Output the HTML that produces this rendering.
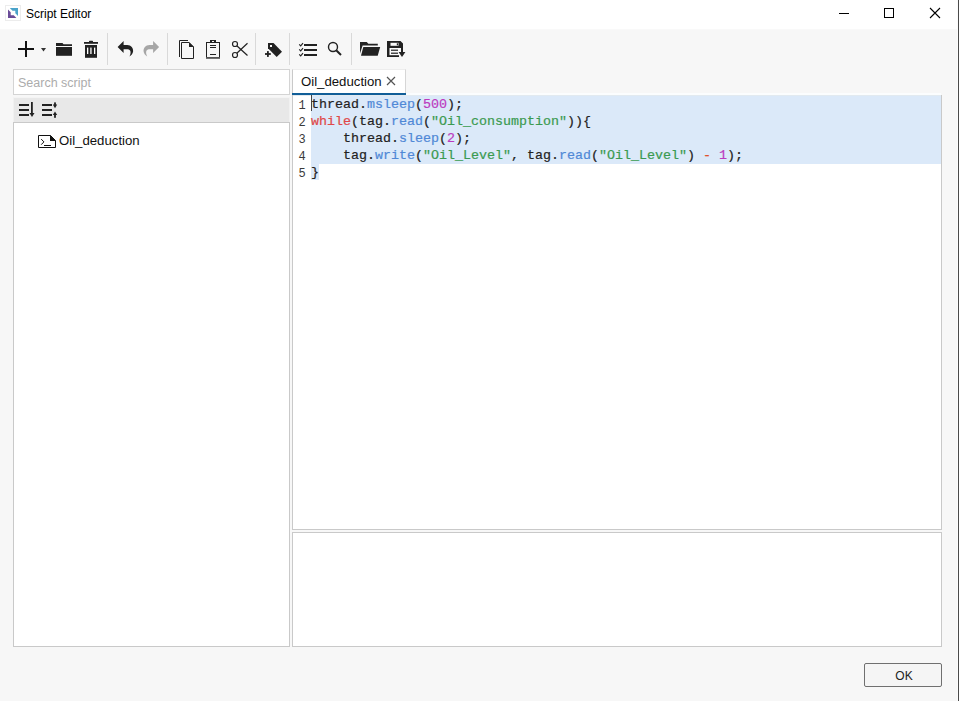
<!DOCTYPE html>
<html><head><meta charset="utf-8">
<style>
html,body{margin:0;padding:0;}
body{width:959px;height:701px;position:relative;overflow:hidden;background:#f7f7f7;font-family:"Liberation Sans",sans-serif;color:#000;}
.a{position:absolute;}
#title{left:0;top:0;width:959px;height:29px;background:#fff;}
#rb{left:958px;top:0;width:1px;height:701px;background:#4a4a4a;}
#rb2{left:957px;top:0;width:1px;height:701px;background:#fcfcfc;}
.sep{width:1px;background:#d9d9d9;top:33px;height:32px;}
#search{left:13px;top:69px;width:275px;height:24px;border:1px solid #d4d4d4;background:#fff;}
#search span{position:absolute;left:4px;top:6px;font-size:12.5px;color:#acacac;}
#sortbar{left:13px;top:97px;width:275px;height:24px;background:#e8e8e8;border:1px solid #f1f1f1;border-top-color:#f4f4f4;border-bottom:none;}
#tree{left:13px;top:122px;width:275px;height:523px;border:1px solid #c9c9c9;background:#fff;}
#tab{left:292px;top:69px;width:114px;height:26px;background:#fff;border:1px solid #d6d6d6;border-left-color:#c9c9c9;border-top-color:#ededed;border-bottom:none;box-sizing:border-box;}
#tabbar{left:292px;top:93px;width:114px;height:2px;background:#115e98;}
#editor{left:292px;top:95px;width:648px;height:434px;border:1px solid #c9c9c9;border-top:none;background:#fff;}
#output{left:292px;top:532px;width:648px;height:113px;border:1px solid #c9c9c9;background:#fff;}
#ok{left:864px;top:663px;width:76px;height:22px;border:1px solid #707070;border-radius:2px;background:#f5f5f5;font-size:12px;text-align:center;line-height:24px;color:#222;box-sizing:border-box;width:78px;height:24px;padding-left:2px;}
.code{font-family:"Liberation Mono",monospace;font-size:13.33px;line-height:17px;white-space:pre;-webkit-text-stroke:0.2px currentColor;}
.ln{left:293px;width:18px;text-align:center;color:#3a3a3a;font-size:12px;-webkit-text-stroke:0;}
.sel{background:#dbe9f9;}
.k{color:#e04848;}
.f{color:#4f88d6;}
.n{color:#bb3bbf;}
.s{color:#3a9a50;}
.o{color:#e0502a;}
.t{color:#222;}
</style></head><body>
<div id="title" class="a"></div>
<div class="a" style="left:0;top:29px;width:959px;height:1px;background:#f9f9f9;"></div>
<!-- app icon -->
<svg class="a" style="left:0;top:0" width="24" height="24" viewBox="0 0 24 24">
<rect x="5.5" y="5.5" width="15" height="15" fill="#fff" stroke="#ececec"/>
<path d="M9.8 8 L18 8 L18 16 L15.3 13.3 L15.3 10.7 L12.5 10.7 Z" fill="#4aa3ca"/>
<path d="M8 9.6 L10.7 12.3 L10.7 15.3 L13.7 15.3 L16.4 18 L8 18 Z" fill="#6a4c98"/>
</svg>
<div class="a" style="left:26px;top:7px;font-size:12px;color:#000;">Script Editor</div>
<!-- window controls -->
<div class="a" style="left:839px;top:13px;width:10px;height:1px;background:#000;"></div>
<div class="a" style="left:884px;top:8px;width:8px;height:8px;border:1px solid #000;"></div>
<svg class="a" style="left:929px;top:7px" width="12" height="12" viewBox="0 0 12 12"><path d="M1 1L11 11M11 1L1 11" stroke="#000" stroke-width="1.1"/></svg>
<div id="rb2" class="a"></div>
<div id="rb" class="a"></div>

<!-- toolbar -->
<svg class="a" style="left:0;top:30px" width="420" height="39" viewBox="0 30 420 39">
<!-- plus -->
<rect x="18" y="48" width="16" height="2" fill="#111"/>
<rect x="25" y="41" width="2" height="16" fill="#111"/>
<path d="M41 48 L46 48 L43.5 51.5 Z" fill="#333"/>
<!-- folder -->
<path d="M56 43 L62.5 43 L63.5 44.2 L72 44.2 L72 45.9 L56 45.9 Z" fill="#222"/>
<rect x="56" y="47" width="16" height="8.8" fill="#222"/>
<!-- trash -->
<rect x="89" y="40.8" width="4" height="1.6" rx="0.6" fill="#222"/>
<rect x="84" y="42" width="14" height="1.8" fill="#222"/>
<rect x="85" y="45" width="12" height="12.8" fill="#222"/>
<rect x="87" y="47.6" width="1.3" height="6.4" fill="#fff"/>
<rect x="90" y="47.6" width="1.8" height="6.4" fill="#c4c4c4"/>
<rect x="94" y="47.6" width="1.3" height="6.4" fill="#fff"/>
<!-- undo -->
<path id="undoP" d="M117.6 47 L123.6 41.1 L123.6 45 L127.2 45 C131.2 45 133.4 48.2 133.1 51.5 C132.8 53.8 131.2 55.6 129.5 56.4 C130.6 54.2 131 51.8 130.1 50.4 C129.4 49.5 128.4 49.2 127 49.2 L123.6 49.2 L123.6 52.9 Z" fill="#222"/>
<!-- redo -->
<path d="M117.6 47 L123.6 41.1 L123.6 45 L127.2 45 C131.2 45 133.4 48.2 133.1 51.5 C132.8 53.8 131.2 55.6 129.5 56.4 C130.6 54.2 131 51.8 130.1 50.4 C129.4 49.5 128.4 49.2 127 49.2 L123.6 49.2 L123.6 52.9 Z" fill="#a6a6a6" transform="translate(276.7 0) scale(-1 1)"/>
<!-- copy -->
<path d="M179.5 57 L179.5 40.5 L188 40.5" fill="none" stroke="#222" stroke-width="1"/>
<path d="M181.5 42.5 L189 42.5 L193.5 47 L193.5 58.5 L181.5 58.5 Z" fill="none" stroke="#222" stroke-width="1"/>
<path d="M189 42 L194 47 L189 47 Z" fill="#222"/>
<!-- paste -->
<rect x="206.5" y="42.5" width="13" height="15.5" fill="none" stroke="#222"/>
<rect x="206" y="57" width="14" height="1.5" fill="#555"/>
<path d="M210 40 L216 40 L216 42.6 L210 42.6 Z M212 41 L212 42 L214 42 L214 41 Z" fill="#222" fill-rule="evenodd"/>
<rect x="210" y="45" width="6" height="1" fill="#222"/>
<rect x="210" y="47" width="6" height="1" fill="#222"/>
<rect x="210" y="54" width="6" height="1" fill="#222"/>
<!-- scissors -->
<circle cx="235" cy="44" r="2.5" fill="none" stroke="#222" stroke-width="1.2"/>
<circle cx="235" cy="55" r="2.5" fill="none" stroke="#222" stroke-width="1.2"/>
<path d="M236.8 45.8 L247.5 55.5 M236.8 53.2 L247.5 43.3" stroke="#222" stroke-width="1.2"/>
<!-- tag -->
<path d="M268 43 L273.5 43 L282 51.8 L276.7 56.9 L268 48.2 Z" fill="#222"/>
<rect x="270" y="45" width="2" height="2" fill="#fafafa"/>
<rect x="265" y="53.1" width="5.8" height="1.8" fill="#222"/>
<rect x="267" y="51.1" width="1.8" height="5.8" fill="#222"/>
<!-- checklist -->
<path d="M299.2 44.4 L300.7 45.9 L303 43.1 M299.2 49.4 L300.7 50.9 L303 48.1 M299.2 54.4 L300.7 55.9 L303 53.1" fill="none" stroke="#222" stroke-width="1.1"/>
<rect x="304" y="44" width="13" height="2" fill="#222"/>
<rect x="304" y="49" width="13" height="2" fill="#222"/>
<rect x="304" y="54" width="13" height="2" fill="#222"/>
<!-- search -->
<circle cx="333" cy="47" r="4.5" fill="none" stroke="#222" stroke-width="1.4"/>
<path d="M336.2 50.3 L341 55" stroke="#222" stroke-width="2"/>
<!-- open folder -->
<path d="M360 42 L366.7 42 L368.4 43.8 L377.8 43.8 L377.8 45.6 L362.6 45.6 L360 53.5 Z" fill="#222"/>
<path d="M363.3 47 L380.2 47 L377.7 55.7 L361 55.7 Z" fill="#222"/>
<!-- save -->
<path d="M387 41 L400.5 41 L403 43.5 L403 48 L399 48 L399 57 L387 57 Z" fill="#222"/>
<rect x="390.5" y="42.8" width="8" height="3" fill="#fafafa"/>
<rect x="396.8" y="43.3" width="1.2" height="2" fill="#222"/>
<rect x="389.5" y="48" width="10.5" height="7.2" fill="#fafafa"/>
<rect x="391" y="49.6" width="7" height="1.2" fill="#222"/>
<rect x="391" y="52.6" width="7" height="1.2" fill="#222"/>
<rect x="401" y="47.5" width="2" height="5" fill="#222"/>
<path d="M398.6 52 L405.4 52 L402 57 Z" fill="#222"/>
</svg>
<div class="a sep" style="left:107px"></div>
<div class="a sep" style="left:167px"></div>
<div class="a sep" style="left:255px"></div>
<div class="a sep" style="left:289px"></div>
<div class="a sep" style="left:351px"></div>

<!-- left panel -->
<div id="search" class="a"><span>Search script</span></div>
<div id="sortbar" class="a"></div>
<svg class="a" style="left:13px;top:97px" width="60" height="25" viewBox="13 97 60 25">
<rect x="19" y="104" width="10" height="2" fill="#222"/>
<rect x="19" y="109" width="10" height="2" fill="#222"/>
<rect x="19" y="114" width="10" height="2" fill="#222"/>
<rect x="31" y="102" width="1.8" height="12" fill="#222"/>
<path d="M29.5 113 L34.5 113 L32 117 Z" fill="#222"/>
<rect x="42" y="104" width="10" height="2" fill="#222"/>
<rect x="42" y="109" width="10" height="2" fill="#222"/>
<rect x="42" y="114" width="10" height="2" fill="#222"/>
<rect x="54.1" y="102.4" width="1.8" height="3" fill="#222"/>
<path d="M52.8 104.6 L57.2 104.6 L55 108.2 Z" fill="#222"/>
<rect x="54.1" y="114.6" width="1.8" height="3.2" fill="#222"/>
<path d="M52.8 115 L57.2 115 L55 111.5 Z" fill="#222"/>
</svg>
<div id="tree" class="a"></div>
<svg class="a" style="left:37px;top:134px" width="20" height="15" viewBox="37 134 20 15">
<path d="M38.5 135.5 L50.5 135.5 L55.5 140.5 L55.5 147.5 L38.5 147.5 Z" fill="#fff" stroke="#111" stroke-width="1"/>
<path d="M50 135 L56 141 L50 141 Z" fill="#111"/>
<path d="M41.2 139.1 L43.9 141.9 L41.2 144.7" fill="none" stroke="#111" stroke-width="1"/>
<rect x="44" y="145" width="7" height="1" fill="#111"/>
</svg>
<div class="a" style="left:59px;top:133px;font-size:13.2px;color:#111;">Oil_deduction</div>

<!-- tab -->
<div id="tab" class="a"></div>
<div class="a" style="left:301px;top:74px;font-size:13.2px;color:#111;">Oil_deduction</div>
<svg class="a" style="left:386px;top:76px" width="10" height="10" viewBox="0 0 10 10"><path d="M1 1L9 9M9 1L1 9" stroke="#555" stroke-width="1.2"/></svg>
<div class="a" style="left:406px;top:93px;width:535px;height:2px;background:#fbfdfe;"></div>
<div id="tabbar" class="a"></div>

<!-- editor -->
<div id="editor" class="a"></div>
<div class="a" style="left:293px;top:95px;width:648px;height:1px;background:#e2eaf0;"></div>
<div class="a" style="left:311px;top:96px;width:630px;height:68px;background:#dbe9f9;"></div>
<div class="a" style="left:311px;top:164px;width:8px;height:16px;background:#dbe9f9;"></div>
<div class="a" style="left:311px;top:95px;width:1px;height:16px;background:#444;"></div>
<div class="a code ln" style="top:98px">1</div>
<div class="a code ln" style="top:115px">2</div>
<div class="a code ln" style="top:132px">3</div>
<div class="a code ln" style="top:149px">4</div>
<div class="a code ln" style="top:166px">5</div>
<div class="a code t" style="left:311px;top:96px">thread.<span class="f">msleep</span>(<span class="n">500</span>);
<span class="k">while</span>(tag.<span class="f">read</span>(<span class="s">"Oil_consumption"</span>)){
    thread.<span class="f">sleep</span>(<span class="n">2</span>);
    tag.<span class="f">write</span>(<span class="s">"Oil_Level"</span>, tag.<span class="f">read</span>(<span class="s">"Oil_Level"</span>) <span class="o">-</span> <span class="n">1</span>);
}</div>

<!-- output -->
<div id="output" class="a"></div>
<div id="ok" class="a">OK</div>
</body></html>
